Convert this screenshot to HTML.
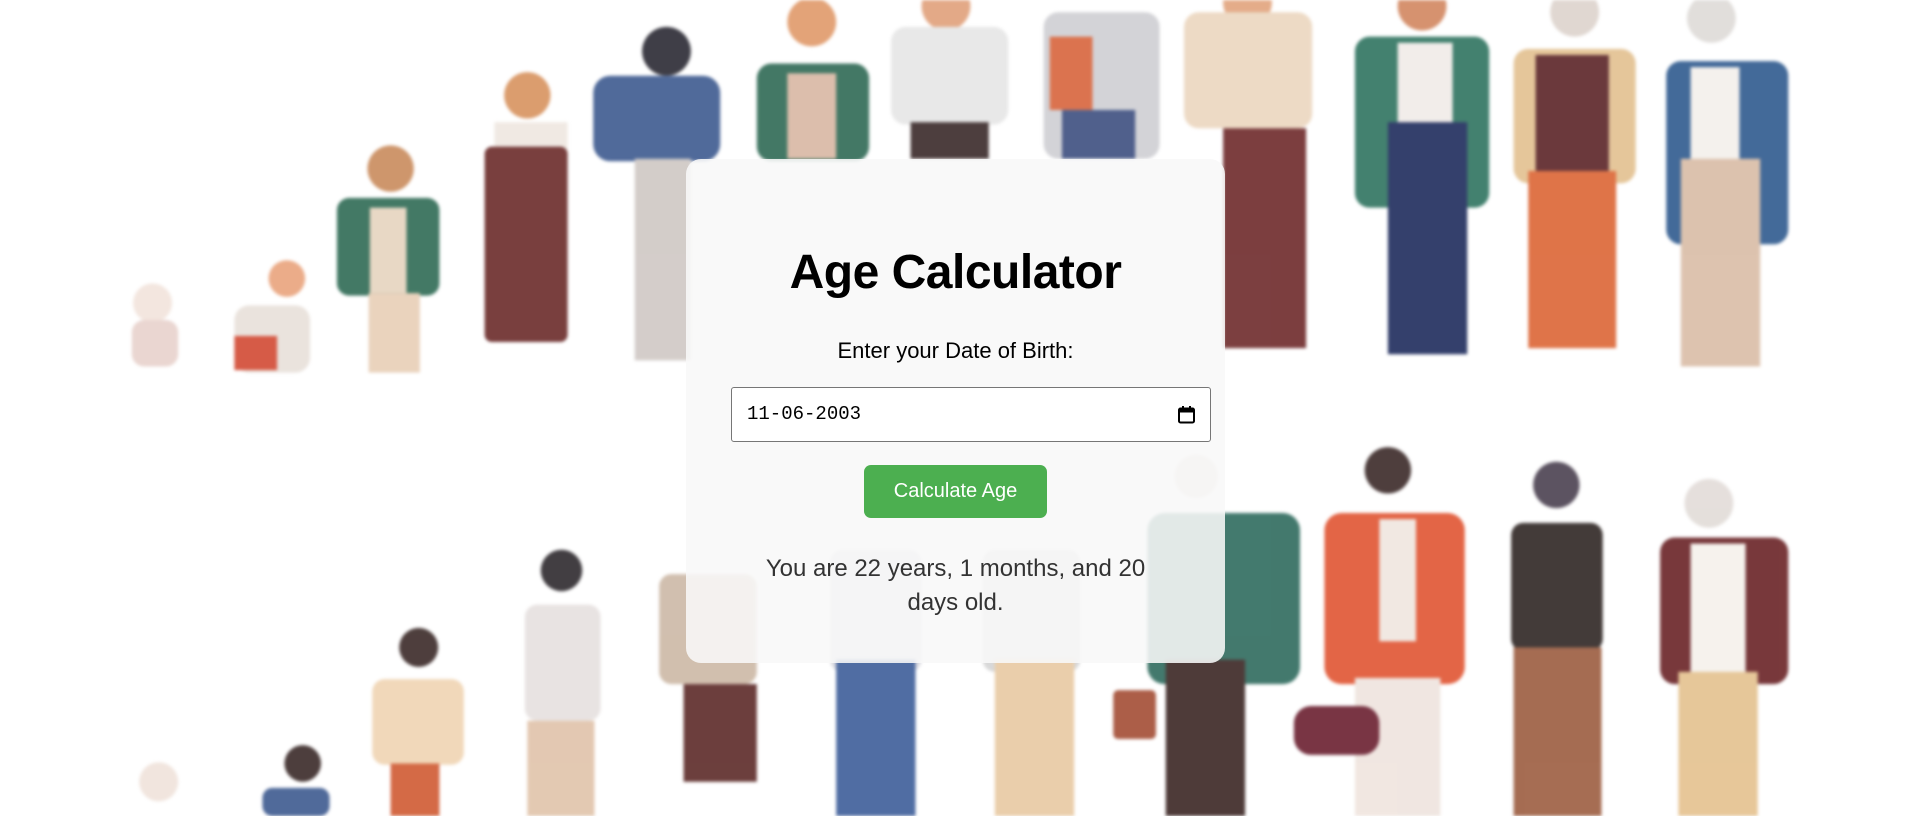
<!DOCTYPE html>
<html><head><meta charset="utf-8"><style>
html,body{margin:0;padding:0;width:1914px;height:816px;overflow:hidden;background:#fff;font-family:"Segoe UI","Liberation Sans",sans-serif}
#bg{position:absolute;left:0;top:0;width:1914px;height:816px;filter:blur(1.5px)}
.card{position:absolute;left:686px;top:159px;width:539px;height:504px;background:rgba(248,248,248,0.88);border-radius:15px;text-align:center;box-sizing:border-box}
h1{position:absolute;left:0;right:0;margin:0;font-size:48px;font-weight:bold;color:#000;line-height:56px}
.card h1{top:86px;letter-spacing:-0.5px}
.lbl{position:absolute;left:0;right:0;top:178px;font-size:22px;color:#000;line-height:28px}
.inp{position:absolute;left:45px;top:228px;width:480px;height:55px;border:1px solid #767676;border-radius:3px;background:#fff;box-sizing:border-box}
.inp span{position:absolute;left:15px;top:15px;font-family:"Liberation Mono",monospace;font-size:19px;color:#000}
.btn{position:absolute;left:178px;top:306px;width:183px;height:53px;background:#4caf50;border-radius:7px;color:#fff;font-size:20px;line-height:53px;font-family:"Liberation Sans",sans-serif}
.res{position:absolute;left:70px;right:70px;top:393px;font-size:24px;color:#333;line-height:34px}
</style></head><body>
<svg id="bg" viewBox="0 0 1568 668" preserveAspectRatio="none">
<g opacity="0.9">
<circle cx="125" cy="248" r="16" fill="#f2e4dc"/><rect x="108" y="262" width="38" height="38" rx="10" fill="#e8d2cc"/>
<circle cx="235" cy="228" r="15" fill="#e9a47d"/><rect x="192" y="250" width="62" height="55" rx="12" fill="#e8e0da"/><rect x="192" y="275" width="35" height="28" fill="#d24a33"/>
<circle cx="320" cy="138" r="19" fill="#c98b5c"/><rect x="276" y="162" width="84" height="80" rx="10" fill="#2f6b55"/><rect x="303" y="170" width="30" height="70" fill="#e6d4bf"/><rect x="302" y="240" width="42" height="65" fill="#e8cfb6"/>
<circle cx="432" cy="78" r="19" fill="#d8935f"/><rect x="405" y="100" width="60" height="40" fill="#efe7e0"/><rect x="397" y="120" width="68" height="160" rx="6" fill="#6b2b2a"/>
<circle cx="546" cy="42" r="20" fill="#2b2a33"/><rect x="486" y="62" width="104" height="70" rx="14" fill="#3d5a90"/><rect x="520" y="130" width="46" height="165" fill="#cfc8c4"/>
<circle cx="665" cy="18" r="20" fill="#e09a6a"/><rect x="620" y="52" width="92" height="80" rx="12" fill="#2f6a55"/><rect x="645" y="60" width="40" height="70" fill="#d9b7a4"/>
<circle cx="775" cy="5" r="20" fill="#e0a07a"/><rect x="730" y="22" width="96" height="80" rx="12" fill="#e6e6e6"/><rect x="746" y="100" width="64" height="30" fill="#3a2a2a"/>
<rect x="855" y="10" width="95" height="120" rx="12" fill="#cfcfd3"/><rect x="860" y="30" width="35" height="60" fill="#d8643c"/><rect x="870" y="90" width="60" height="40" fill="#3d4f80"/>
<circle cx="1022" cy="2" r="20" fill="#e1a37d"/><rect x="970" y="10" width="105" height="95" rx="12" fill="#ecd6bf"/><rect x="1002" y="105" width="68" height="180" fill="#6e2a2b"/>
<circle cx="1165" cy="5" r="20" fill="#d28760"/><rect x="1110" y="30" width="110" height="140" rx="12" fill="#2f7460"/><rect x="1145" y="35" width="45" height="70" fill="#f1ece8"/><rect x="1137" y="100" width="65" height="190" fill="#1e2c5c"/>
<circle cx="1290" cy="10" r="20" fill="#ddd3cd"/><rect x="1240" y="40" width="100" height="110" rx="12" fill="#e3c08f"/><rect x="1258" y="45" width="60" height="95" fill="#5b2427"/><rect x="1252" y="140" width="72" height="145" fill="#dc6535"/>
<circle cx="1402" cy="15" r="20" fill="#dedbd8"/><rect x="1365" y="50" width="100" height="150" rx="12" fill="#2f5a8e"/><rect x="1385" y="55" width="40" height="80" fill="#f3f0ec"/><rect x="1377" y="130" width="65" height="170" fill="#d9bca6"/>
<circle cx="130" cy="640" r="16" fill="#f0e2da"/>
<circle cx="248" cy="625" r="15" fill="#3a2a28"/><rect x="215" y="645" width="55" height="23" rx="8" fill="#3d5a90"/>
<circle cx="343" cy="530" r="16" fill="#3b2a28"/><rect x="305" y="556" width="75" height="70" rx="10" fill="#f0d4b3"/><rect x="320" y="625" width="40" height="43" fill="#d05a32"/>
<circle cx="460" cy="467" r="17" fill="#2e2a2e"/><rect x="430" y="495" width="62" height="95" rx="10" fill="#e6e0df"/><rect x="432" y="590" width="55" height="78" fill="#e0c3aa"/>
<rect x="540" y="470" width="80" height="90" rx="10" fill="#ccb8a6"/><rect x="560" y="560" width="60" height="80" fill="#5c2a28"/>
<rect x="680" y="450" width="75" height="100" rx="10" fill="#d8d8de"/><rect x="685" y="540" width="65" height="128" fill="#3e5e9a"/>
<rect x="805" y="450" width="80" height="100" rx="10" fill="#d4d4d4"/><rect x="815" y="540" width="65" height="128" fill="#e8c9a2"/>
<circle cx="980" cy="390" r="18" fill="#e2d8d0"/><rect x="940" y="420" width="125" height="140" rx="14" fill="#2f6b5e"/><rect x="955" y="540" width="65" height="128" fill="#3b2624"/><rect x="912" y="565" width="35" height="40" rx="4" fill="#a34d35"/>
<circle cx="1137" cy="385" r="19" fill="#3b2a28"/><rect x="1085" y="420" width="115" height="140" rx="14" fill="#e05532"/><rect x="1130" y="425" width="30" height="100" fill="#f0e6df"/><rect x="1110" y="555" width="70" height="113" fill="#efe4de"/><rect x="1060" y="578" width="70" height="40" rx="14" fill="#6b2030"/>
<circle cx="1275" cy="397" r="19" fill="#4a4050"/><rect x="1238" y="428" width="75" height="105" rx="10" fill="#2f2624"/><rect x="1240" y="530" width="72" height="138" fill="#9c5d40"/>
<circle cx="1400" cy="412" r="20" fill="#e2dcd8"/><rect x="1360" y="440" width="105" height="120" rx="12" fill="#6a2326"/><rect x="1385" y="445" width="45" height="110" fill="#f5f1ec"/><rect x="1375" y="550" width="65" height="118" fill="#e4c18e"/>
</g>
</svg>
<div class="card">
<h1>Age Calculator</h1>
<div class="lbl">Enter your Date of Birth:</div>
<div class="inp"><span>11-06-2003</span>
<svg style="position:absolute;right:14px;top:17px" width="19" height="20" viewBox="0 0 19 20"><rect x="2" y="3.5" width="15" height="14" rx="1.5" fill="none" stroke="#000" stroke-width="2"/><rect x="2" y="3.5" width="15" height="4" fill="#000"/><rect x="5" y="1" width="2" height="4" fill="#000"/><rect x="12" y="1" width="2" height="4" fill="#000"/></svg></div>
<div class="btn">Calculate Age</div>
<div class="res">You are 22 years, 1 months, and 20 days old.</div>
</div>
</body></html>
